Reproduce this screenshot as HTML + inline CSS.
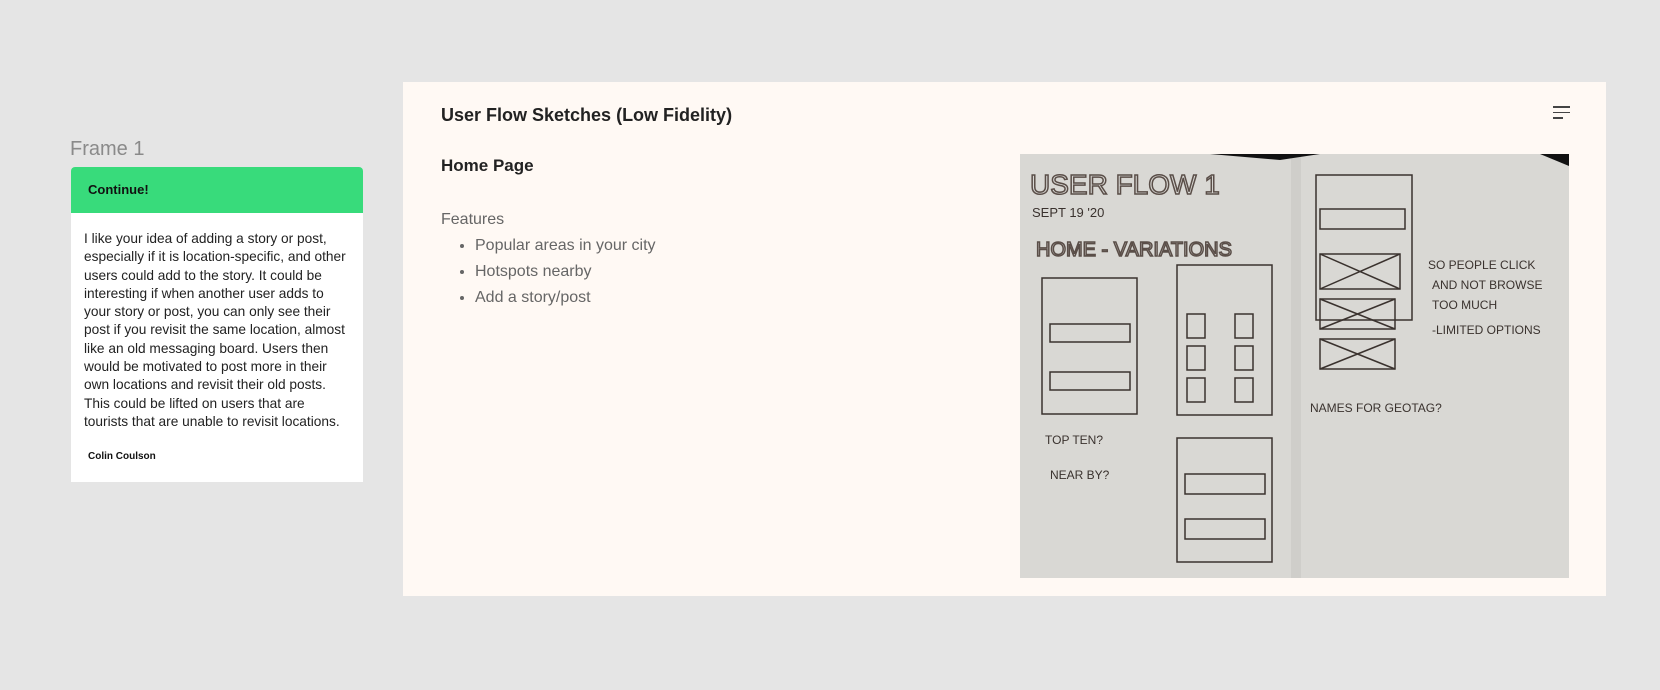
<!DOCTYPE html>
<html><head><meta charset="utf-8"><style>
body{margin:0;width:1660px;height:690px;background:#e5e5e5;font-family:"Liberation Sans",sans-serif;position:relative;overflow:hidden}
.frame{position:absolute;left:70px;top:138px;font-size:20px;color:#8a8a8a}
.card{position:absolute;left:71px;top:167px;width:292px;height:315px;background:#fff;border-radius:4px 4px 0 0;overflow:hidden}
.card .hd{height:46px;background:#38db7b;font-weight:bold;font-size:13px;color:#111;line-height:46px;padding-left:17px}
.card .bd{padding:17px 0 0 13px;font-size:13.7px;line-height:18.3px;color:#222;white-space:nowrap}
.card .au{padding:20px 0 0 17px;font-size:10px;line-height:12px;font-weight:bold;color:#111}
.panel{position:absolute;left:403px;top:82px;width:1203px;height:514px;background:#fff9f4}
.t1{position:absolute;left:38px;top:23px;font-size:18px;font-weight:bold;color:#222}
.t2{position:absolute;left:38px;top:74px;font-size:17px;font-weight:bold;color:#222}
.feat{position:absolute;left:38px;top:125px;font-size:16px;color:#666;line-height:26px}
.feat ul{margin:0;padding-left:34px}
.menu{position:absolute;left:1150px;top:24px}
.menu i{display:block;height:1.5px;background:#444;margin-bottom:4px}
.img{position:absolute;left:617px;top:72px;width:549px;height:424px;background:#d8d7d3}
</style></head><body>
<div class="frame">Frame 1</div>
<div class="card"><div class="hd">Continue!</div>
<div class="bd">I like your idea of adding a story or post,<br>especially if it is location-specific, and other<br>users could add to the story. It could be<br>interesting if when another user adds to<br>your story or post, you can only see their<br>post if you revisit the same location, almost<br>like an old messaging board. Users then<br>would be motivated to post more in their<br>own locations and revisit their old posts.<br>This could be lifted on users that are<br>tourists that are unable to revisit locations.</div>
<div class="au">Colin Coulson</div></div>
<div class="panel">
<div class="t1">User Flow Sketches (Low Fidelity)</div>
<div class="menu"><i style="width:17px"></i><i style="width:17px"></i><i style="width:10px"></i></div>
<div class="t2">Home Page</div>
<div class="feat">Features<ul><li>Popular areas in your city</li><li>Hotspots nearby</li><li>Add a story/post</li></ul></div>
<div class="img"><svg width="549" height="424" viewBox="0 0 549 424" fill="none" stroke="#3a322e" stroke-width="1.5">
<rect x="0" y="0" width="549" height="424" fill="#d9d8d4" stroke="none"/>
<rect x="271" y="0" width="10" height="424" fill="#cfceca" stroke="none"/>
<path d="M190 0 L260 6 L300 0Z M520 0 L549 0 L549 12Z" fill="#111" stroke="none"/>
<text x="10" y="40" font-size="28" fill="none" stroke="#5a4e48" font-family="Liberation Sans">USER FLOW 1</text>
<text x="12" y="63" font-size="13" fill="#3a322e" stroke="none" font-family="Liberation Sans">SEPT 19 '20</text>
<text x="16" y="102" font-size="20" fill="none" stroke="#5a4e48" font-family="Liberation Sans">HOME - VARIATIONS</text>
<rect x="22" y="124" width="95" height="136"/><rect x="157" y="111" width="95" height="150"/>
<rect x="157" y="284" width="95" height="124"/><rect x="296" y="21" width="96" height="145"/>
<rect x="300" y="100" width="80" height="35"/><rect x="300" y="145" width="75" height="30"/><rect x="300" y="185" width="75" height="30"/>
<path d="M300 100l80 35M300 135l80-35M300 145l75 30M300 175l75-30M300 185l75 30M300 215l75-30"/>
<rect x="300" y="55" width="85" height="20"/>
<text x="408" y="115" font-size="12" fill="#3a322e" stroke="none">SO PEOPLE CLICK</text>
<text x="412" y="135" font-size="12" fill="#3a322e" stroke="none">AND NOT BROWSE</text>
<text x="412" y="155" font-size="12" fill="#3a322e" stroke="none">TOO MUCH</text>
<text x="412" y="180" font-size="12" fill="#3a322e" stroke="none">-LIMITED OPTIONS</text>
<text x="290" y="258" font-size="12" fill="#3a322e" stroke="none">NAMES FOR GEOTAG?</text>
<text x="25" y="290" font-size="12" fill="#3a322e" stroke="none">TOP TEN?</text>
<text x="30" y="325" font-size="12" fill="#3a322e" stroke="none">NEAR BY?</text>
<rect x="30" y="170" width="80" height="18"/><rect x="30" y="218" width="80" height="18"/>
<rect x="167" y="160" width="18" height="24"/><rect x="215" y="160" width="18" height="24"/>
<rect x="167" y="192" width="18" height="24"/><rect x="215" y="192" width="18" height="24"/>
<rect x="167" y="224" width="18" height="24"/><rect x="215" y="224" width="18" height="24"/>
<rect x="165" y="320" width="80" height="20"/><rect x="165" y="365" width="80" height="20"/>
</svg></div>
</div>
</body></html>
